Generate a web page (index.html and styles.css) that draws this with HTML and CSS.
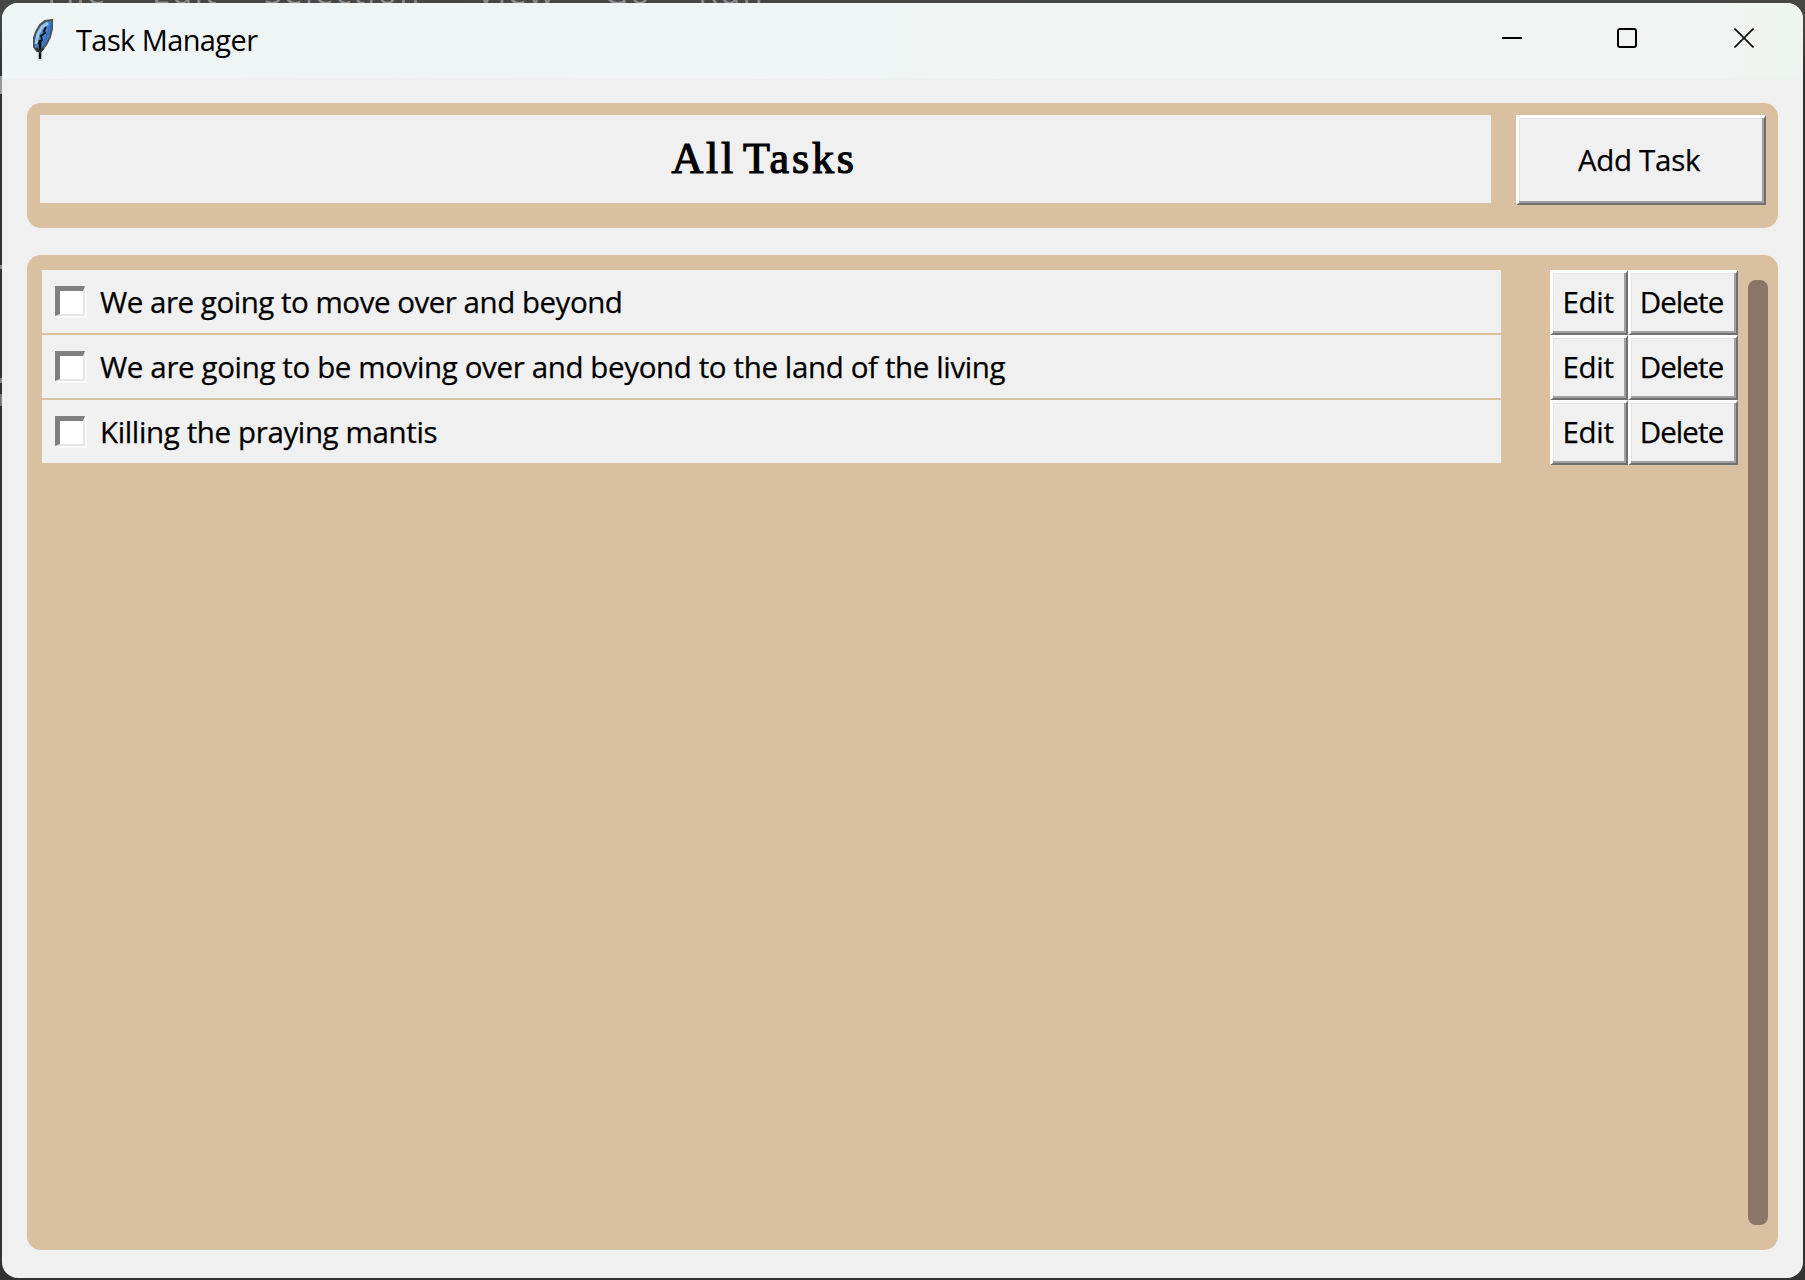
FILE: index.html
```html
<!DOCTYPE html>
<html lang="en">
<head>
<meta charset="utf-8">
<title>Task Manager</title>
<link rel="stylesheet" href="styles.css">
</head>
<body>
<div class="desktop">
  <div class="editor-menu"><span class="m1">File</span><span class="m2">Edit</span><span class="m3">Selection</span><span class="m4">View</span><span class="m5">Go</span><span class="m6">Run</span></div>
  <main class="window">
    <header class="titlebar">
      <svg class="feather" viewBox="0 0 24 42" width="24" height="42">
        <path d="M22 2 L15 3 L10 7 L6 14 L4 20 L4 29 L7 33 L11 32 L16 27 L20 19 L22 11 Z" fill="#4b86cf" stroke="#4c5256" stroke-width="2"/>
        <path d="M18 5 L12 9 L8 16 L6 26" fill="none" stroke="#9cc8ee" stroke-width="3"/>
        <path d="M21 5 L19 13 L15 22 L12 28" fill="none" stroke="#2f73cb" stroke-width="2.5"/>
        <path d="M16 9 L14 13 L15 15 L11 18 L12 22 L8 26" fill="none" stroke="#10151c" stroke-width="2"/>
        <path d="M10 22 V41" stroke="#111" stroke-width="2.6"/>
        <path d="M6 30 L10 34 L14 30" fill="none" stroke="#333" stroke-width="2"/>
      </svg>
      <span class="caption">Task Manager</span>
      <div class="controls">
        <svg width="20" height="20" viewBox="0 0 20 20"><path d="M0 10H20" stroke="#000" stroke-width="2"/></svg>
        <svg width="20" height="20" viewBox="0 0 20 20"><rect x="1" y="1" width="18" height="18" rx="2" fill="none" stroke="#000" stroke-width="2"/></svg>
        <svg class="close" width="20" height="20" viewBox="0 0 20 20"><path d="M.5 .5L19.5 19.5M19.5 .5L.5 19.5" stroke="#111" stroke-width="1.7"/></svg>
      </div>
    </header>
    <section class="panel heading">
      <h1>All Tasks</h1>
      <button class="add">Add Task</button>
    </section>
    <section class="panel list">
      <div class="rows">
        <div class="row"><label><i class="check"></i><span class="task first">We are going to move over and beyond</span></label><button class="edit">Edit</button><button class="delete">Delete</button></div>
        <div class="row"><label><i class="check"></i><span class="task">We are going to be moving over and beyond to the land of the living</span></label><button class="edit">Edit</button><button class="delete">Delete</button></div>
        <div class="row"><label><i class="check"></i><span class="task">Killing the praying mantis</span></label><button class="edit">Edit</button><button class="delete">Delete</button></div>
      </div>
      <div class="scrollbar"></div>
    </section>
  </main>
</div>
</body>
</html>
```
FILE: styles.css
```css
* { box-sizing: border-box; }
body {
  margin: 0;
  background: #353535;
  font-family: "Open Sans", "Noto Sans", sans-serif;
  color: #000;
}
.desktop {
  width: 1805px;
  height: 1280px;
  padding: 0 2px 2px;
  overflow: hidden;
  background:
    linear-gradient(#999, #999) 0 76px / 2px 18px no-repeat,
    linear-gradient(#888, #888) 0 265px / 2px 4px no-repeat,
    linear-gradient(#888, #888) 0 378px / 2px 5px no-repeat,
    linear-gradient(#777, #777) 0 394px / 2px 12px no-repeat,
    linear-gradient(#464644 0 20px, #333 70px);
}

/* Menu bar of the editor behind the window */
.editor-menu {
  height: 3px;
  overflow: hidden;
  display: flex;
  align-items: flex-end;
  padding-left: 45px;
  color: #8c8c8c;
  font-size: 33px;
  line-height: 44px;
  letter-spacing: 2px;
}
.editor-menu span { flex: none; margin-bottom: -11px; }
.m1 { width: 105px; }
.m2 { width: 112px; }
.m3 { width: 212px; }
.m4 { width: 128px; }
.m5 { width: 94px; }

.window {
  height: 1275px;
  border-radius: 16px;
  background: #f0f0f0;
  overflow: hidden;
}
.titlebar {
  height: 76px;
  display: flex;
  align-items: flex-start;
  padding: 15px 49px 0 28px;
  background: linear-gradient(90deg, #eff4f4, #eef5f4 45%, #f2f4f3 60%, #f1f4f3 94%, #eef4ef);
}
.feather { flex: none; }
.caption {
  margin: 2px 0 0 22px;
  font-size: 29px;
  line-height: 39px;
  letter-spacing: -0.6px;
}
.controls { margin: 10px 0 0 auto; display: flex; gap: 95px; }
.close { margin-left: 2px; }

.panel {
  margin: 0 25px;
  background: #d9c0a1;
  border-radius: 14px;
  display: flex;
}
.heading { margin-top: 24px; height: 125px; padding: 12px 12.5px; gap: 25px; }
h1 {
  margin: 0;
  width: 1451px;
  height: 88px;
  padding-right: 2px;
  background: #f0f0f0;
  font: 400 44px/87px "Liberation Serif", serif;
  -webkit-text-stroke: 1.2px #000;
  letter-spacing: 2.8px;
  word-spacing: -6px;
  text-align: center;
}
button {
  margin: 0;
  padding: 0 2px 2px 0;
  display: flex;
  justify-content: center;
  align-items: center;
  font: 29.5px/40px "Open Sans", "Noto Sans", sans-serif;
  letter-spacing: -0.3px;
  color: #000;
  -webkit-text-stroke: 0.25px #000;
  background: #f0f0f0;
  border: solid;
  border-width: 3px 2px 2px 3px;
  border-color: #fff #707070 #707070 #fff;
  border-radius: 0;
  box-shadow: inset -2px -2px #a0a0a0, inset 1px 1px #e4e4e4;
}
.add { width: 250px; height: 90px; padding-right: 4px; }

.list {
  margin-top: 27px;
  height: 995px;
  padding: 15px 10px 25px 15px;
  justify-content: space-between;
}
.row { display: flex; height: 65px; }
label {
  width: 1459px;
  height: 63px;
  margin-right: 49px;
  padding-left: 13px;
  display: flex;
  align-items: center;
  background: #f0f0f0;
  font-size: 29.5px;
  line-height: 40px;
  white-space: nowrap;
}
.task { letter-spacing: -0.37px; -webkit-text-stroke: 0.25px #000; }
.first { letter-spacing: -0.47px; }
.check {
  width: 30px;
  height: 30px;
  margin: 0 15px 2px 0;
  background: #fff;
  border: solid;
  border-width: 5px 2px 2px 5px;
  border-color: #7f7f7f #e6e6e6 #e6e6e6 #7f7f7f;
  box-shadow: 2px 2px #fafafa;
}
.edit { width: 78px; padding-right: 3px; }
.delete { width: 110px; padding-right: 4px; letter-spacing: -0.9px; }
.scrollbar {
  width: 20px;
  height: 945px;
  margin-top: 10px;
  border-radius: 8px;
  background: #8b7569;
}
```
